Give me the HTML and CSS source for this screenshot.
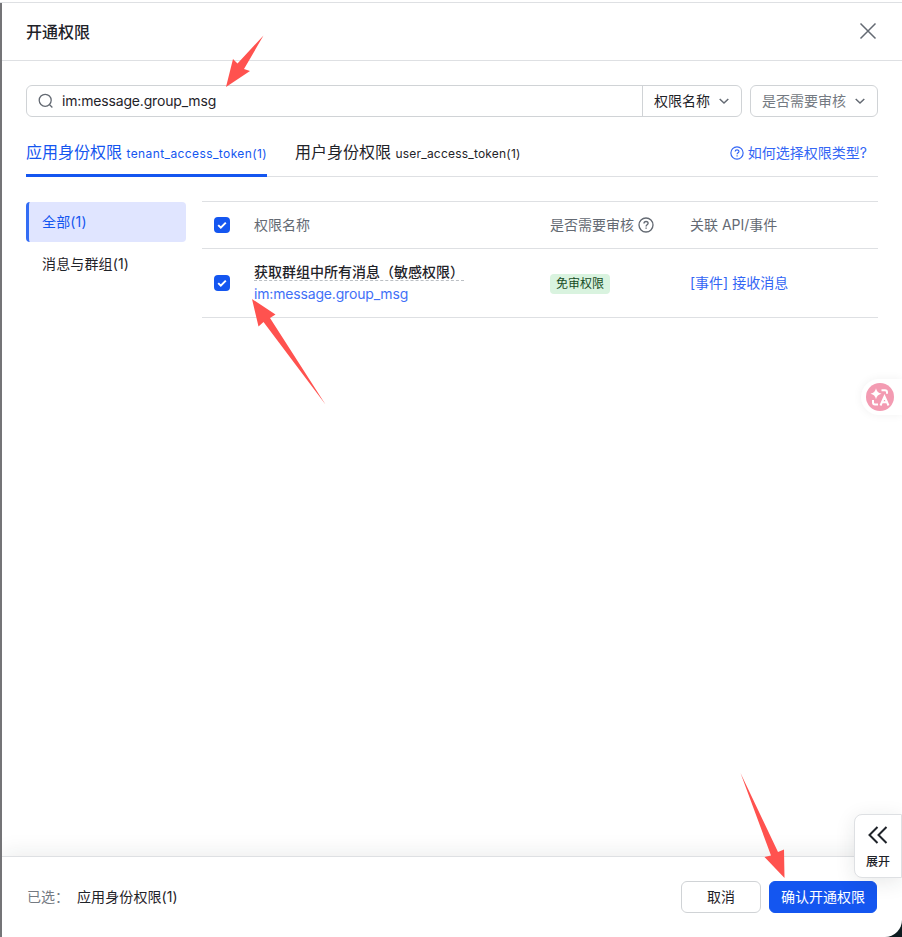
FILE: index.html
```html
<!DOCTYPE html>
<html lang="zh-CN">
<head>
<meta charset="utf-8">
<title>开通权限</title>
<link rel="stylesheet" href="styles.css">
</head>
<body>
<div class="drawer">
  <header class="header">
    <h1>开通权限</h1>
    <svg class="close" width="20" height="20" viewBox="0 0 20 20"><path d="M2.5 2.5l15 15M17.5 2.5l-15 15"/></svg>
  </header>
  <main class="content">
    <div class="filters">
      <div class="search">
        <div class="search-input">
          <svg width="16" height="16" viewBox="0 0 16 16"><circle cx="7.2" cy="7.3" r="6"/><path d="M11.6 11.8l2.8 2.6"/></svg>
          <span class="scope">im:message.group_msg</span>
        </div>
        <div class="search-type"><span>权限名称</span><svg class="chevron" width="12" height="12" viewBox="0 0 12 12"><path d="M1.7 4l4.3 4 4.3-4"/></svg></div>
      </div>
      <div class="select"><span>是否需要审核</span><svg class="chevron" width="12" height="12" viewBox="0 0 12 12"><path d="M1.7 4l4.3 4 4.3-4"/></svg></div>
    </div>
    <nav class="tabs">
      <div class="tab active">应用身份权限 <small>tenant_access_token(1)</small></div>
      <div class="tab">用户身份权限 <small>user_access_token(1)</small></div>
      <a class="help"><svg class="question" width="14" height="14" viewBox="0 0 16 16"><circle cx="8" cy="8" r="7"/><path d="M5.900 6.400c0-2.700 4.300-2.700 4.300-.2 0 1.600-2.100 1.500-2.100 3.200M8.100 10.700v1.300"/></svg>如何选择权限类型?</a>
    </nav>
    <div class="panel">
      <aside class="categories">
        <div class="category selected">全部(1)</div>
        <div class="category">消息与群组(1)</div>
      </aside>
      <section class="table">
        <div class="row head">
          <span class="checkbox"><svg width="16" height="16" viewBox="0 0 16 16"><path d="M4.2 8.100l2.600 2.500 5-5"/></svg></span>
          <span>权限名称</span>
          <span class="with-icon">是否需要审核<svg class="question" width="16" height="16" viewBox="0 0 16 16"><circle cx="8" cy="8" r="7"/><path d="M6 6.400c0-2.500 4.100-2.500 4.100-.2 0 1.600-2 1.500-2 3.200M8.100 10.600v1.200"/></svg></span>
          <span>关联 API/事件</span>
        </div>
        <div class="row item">
          <span class="checkbox"><svg width="16" height="16" viewBox="0 0 16 16"><path d="M4.200 8.100l2.600 2.500 5-5"/></svg></span>
          <div class="permission"><div class="name">获取群组中所有消息（敏感权限）</div><div class="code scope">im:message.group_msg</div></div>
          <div><span class="tag">免审权限</span></div>
          <a class="event">[事件] 接收消息</a>
        </div>
      </section>
    </div>
  </main>
  <footer class="footer">
    <span class="picked">已选：</span><span class="summary">应用身份权限(1)</span>
    <button class="button">取消</button>
    <button class="button primary">确认开通权限</button>
  </footer>
</div>
<div class="translate"><svg width="28" height="28" viewBox="0 0 28 28"><circle cx="14" cy="14" r="14"/><path class="spark" d="M10 5.200q.9 4.700 5.500 5.500-4.600.9-5.500 5.500-.9-4.600-5.500-5.500 4.600-.8 5.500-5.500z"/><path class="lines" d="M15.500 7.300h3.500q2 0 2 2v1.500M7 17v2.500q0 2 2 2h3M14.500 22.500l4-9 4 9M16 19.300h5"/></svg></div>
<div class="expand"><svg width="20" height="20" viewBox="0 0 20 20"><path d="M9.500 2l-8 8 8 8M18.500 2l-8 8 8 8"/></svg><span>展开</span></div>
<svg class="arrows" width="902" height="937" viewBox="0 0 902 937">
  <path d="M263.500 35.500L244 69 250 71 226 87 233 59 237.500 63.500z"/>
  <path d="M252 299L275.500 314.500 270 318 325.500 404.500 263.500 322 258.500 326.500z"/>
  <path d="M740.500 773L778 852 784 849.500 784.500 878 764.500 857 771 855.500z"/>
</svg>
</body>
</html>
```
FILE: styles.css
```css
* { box-sizing: border-box; }
body {
  margin: 0;
  height: 937px;
  overflow: hidden;
  position: relative;
  background: linear-gradient(#fff 2px, #dee0e3 2px 3px, transparent 3px), linear-gradient(to right, #747477 50%, #0d1c20 50%);
  color: #1f2329;
  font: 14px/22px Inter, "Noto Sans CJK SC", sans-serif;
}
svg { fill: none; flex: none; display: block; }
.drawer {
  height: 937px;
  margin-left: 2px;
  display: flex;
  flex-direction: column;
  background: #fff;
  border-top: 2px solid #fff;
  border-bottom-right-radius: 17px;
  overflow: hidden;
}
.header {
  height: 59px;
  flex: none;
  display: flex;
  align-items: center;
  justify-content: space-between;
  padding: 0 24px;
  border-top: 1px solid #dee0e3;
  border-bottom: 1px solid #dee0e3;
}
.header h1 { margin: 0; font-size: 16px; font-weight: 500; line-height: 24px; }
.close { stroke: #646a73; stroke-width: 1.5; margin-bottom: 2px; }
.content { flex: 1; padding: 24px 24px 0; }
.filters { display: flex; gap: 8px; height: 32px; }
.search { flex: 1; display: flex; border: 1px solid #d0d3d6; border-radius: 6px; }
.search-input { flex: 1; display: flex; align-items: center; gap: 8px; padding-left: 11px; }
.search-input svg { stroke: #646a73; stroke-width: 1.3; }
.scope { letter-spacing: -.17px; }
.search-type { width: 99px; display: flex; align-items: center; justify-content: space-between; padding: 0 11px; border-left: 1px solid #d0d3d6; }
.chevron { stroke: #646a73; stroke-width: 1.5; }
.select { width: 128px; display: flex; align-items: center; justify-content: space-between; padding: 0 11px; color: #747a82; border: 1px solid #d0d3d6; border-radius: 6px; }
.tabs { display: flex; align-items: stretch; gap: 28px; height: 60px; border-bottom: 1px solid #dee0e3; }
.tab { height: 60px; padding-top: 23px; font-size: 16px; line-height: 24px; white-space: nowrap; }
.tab small { font-size: 12px; letter-spacing: .2px; }
.tab.active { width: 241px; color: #1456f0; background: linear-gradient(#1456f0, #1456f0) bottom / 100% 3px no-repeat; border-radius: 2px 2px 0 0; }
.tab.active small { letter-spacing: .4px; }
.help { margin: 25px 11px 0 auto; height: 22px; display: flex; align-items: center; gap: 4px; color: #3366f5; white-space: nowrap; }
.question { stroke: currentColor; stroke-width: 1.35; }
.panel { display: flex; gap: 16px; margin-top: 24px; }
.categories { width: 160px; padding-top: 1px; }
.category { height: 40px; margin-bottom: 2px; padding: 0 16px; line-height: 40px; border-radius: 4px; letter-spacing: .15px; }
.category.selected { color: #1456f0; background: #e0e5ff; border-left: 3px solid #336df4; padding-left: 13px; }
.table { flex: 1; border-top: 1px solid #dee0e3; }
.row { display: grid; grid-template-columns: 40px 296px 140px 1fr; align-items: center; padding-left: 12px; border-bottom: 1px solid #dee0e3; }
.head { height: 47px; color: #646a73; }
.item { height: 69px; }
.checkbox { width: 16px; height: 16px; background: #1456f0; border-radius: 4px; }
.checkbox svg { stroke: #fff; stroke-width: 2; }
.with-icon { display: flex; align-items: center; gap: 4px; }
.name { width: 210px; height: 20px; line-height: 22px; font-weight: 500; border-bottom: 1px dashed #bbbfc4; white-space: nowrap; }
.code { height: 22px; margin-top: 2px; color: #4170f7; }
.tag { display: block; width: 60px; height: 20px; margin-top: 2px; padding: 0 6px; border-radius: 4px; background: #d9f3df; color: #164b24; font-size: 12px; line-height: 20px; white-space: nowrap; }
.event { color: #3366f5; }
.footer {
  height: 81px;
  flex: none;
  display: flex;
  align-items: center;
  padding: 0 25px;
  border-top: 1px solid #dee0e3;
  box-shadow: 0 -4px 20px rgba(31, 35, 41, .08);
}
.picked { color: #747a82; width: 50px; white-space: nowrap; }
.summary { margin-right: auto; letter-spacing: .1px; }
.button { width: 80px; height: 32px; margin-left: 8px; padding: 0; color: #1f2329; background: #fff; border: 1px solid #d0d3d6; border-radius: 6px; font: inherit; }
.button.primary { width: 108px; color: #fff; background: #1456f0; border-color: #1456f0; }
.translate { position: absolute; right: 0; top: 379px; width: 41px; height: 36px; padding: 4px 5px; border-radius: 18px 0 0 18px; background: #fff; box-shadow: 0 0 10px rgba(0, 0, 0, .06); }
.translate circle { fill: #f39bb2; }
.spark { fill: #fff; }
.lines { stroke: #fff; stroke-width: 2; }
.expand { position: absolute; right: 0; top: 814px; width: 48px; height: 64px; display: flex; flex-direction: column; align-items: center; padding-top: 10px; gap: 7px; background: #fff; border: 1px solid #dee0e3; border-radius: 8px 0 0 8px; box-shadow: 0 4px 20px rgba(31, 35, 41, .1); font-size: 12px; font-weight: 500; line-height: 20px; }
.expand svg { stroke: #1f2329; stroke-width: 2; }
.arrows { position: absolute; left: 0; top: 0; fill: #ff524f; pointer-events: none; }
```
